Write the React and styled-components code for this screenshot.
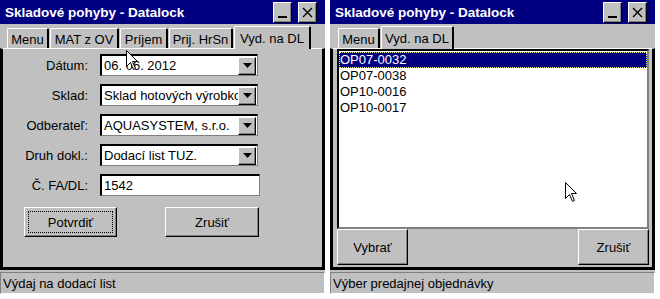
import React from "react";
import styled, { createGlobalStyle } from "styled-components";

const GlobalStyle = createGlobalStyle`
  html, body { margin: 0; padding: 0; background: #ffffff; }
  body { font-family: "Liberation Sans", Arial, sans-serif; font-size: 13px; color: #000; }
  * { box-sizing: border-box; }
`;

const Screen = styled.div`
  display: flex;
  gap: 5px;
  width: 660px;
  height: 299px;
  position: relative;
  overflow: hidden;
`;

const Window = styled.div`
  width: 325px;
  height: 294px;
  display: flex;
  flex-direction: column;
  background: #c0c0c0;
`;

const TitleBar = styled.div`
  height: 24px;
  flex: none;
  background: #000080;
  display: flex;
  align-items: center;
  padding: 0 8px 0 5px;
`;

const Title = styled.div`
  color: #fff;
  font-weight: bold;
  font-size: 13.5px;
  white-space: nowrap;
`;

const Controls = styled.div`
  margin-left: auto;
  display: flex;
  gap: 6px;
`;

const CaptionButton = styled.div`
  width: 19px;
  height: 21px;
  background: #c0c0c0;
  border-top: 1px solid #fff;
  border-left: 1px solid #fff;
  border-right: 1px solid #000;
  border-bottom: 1px solid #000;
  box-shadow: inset -1px -1px 0 #808080;
  display: flex;
  align-items: center;
  justify-content: center;
`;

const TabStrip = styled.div`
  height: 24px;
  flex: none;
  display: flex;
  align-items: flex-end;
  padding-left: ${(p) => p.$pad}px;
`;

const Tab = styled.div`
  flex: none;
  width: ${(p) => p.$w}px;
  height: ${(p) => (p.$active ? 23 : 20)}px;
  margin-right: ${(p) => (p.$active ? 0 : 1)}px;
  display: flex;
  align-items: center;
  justify-content: center;
  white-space: nowrap;
  font-size: 13px;
  border-top: 1px solid #fff;
  border-left: 1px solid #fff;
  border-right: 2px solid #000;
  border-top-left-radius: 2px;
  border-top-right-radius: 2px;
  position: relative;
  padding-top: ${(p) => (p.$active ? 0 : 2)}px;
  ${(p) => (p.$active ? "z-index: 1; margin-bottom: -1px; background: #c0c0c0;" : "")}
`;

const Frame = styled.div`
  flex: 1;
  display: flex;
  flex-direction: column;
  border-left: 3px solid #000;
  border-right: 3px solid #000;
  border-bottom: 3px solid #000;
  border-top: 1px solid #fff;
  min-height: 0;
`;

const Form = styled.div`
  flex: 1;
  display: flex;
  flex-direction: column;
  padding-top: 1px;
`;

const Row = styled.div`
  display: grid;
  grid-template-columns: 85px ${(p) => p.$fw}px;
  column-gap: 12px;
  align-items: center;
  height: 30px;
`;

const Label = styled.div`
  text-align: right;
  font-size: 13px;
  white-space: nowrap;
`;

const Field = styled.div`
  height: 22px;
  background: #fff;
  border-top: 2px solid #000;
  border-left: 2px solid #000;
  border-right: 1px solid #808080;
  border-bottom: 1px solid #808080;
  display: flex;
  align-items: center;
  padding-left: 2px;
  font-size: 13px;
  white-space: nowrap;
  overflow: hidden;
`;

const FieldText = styled.div`
  flex: 1;
  overflow: hidden;
  white-space: nowrap;
`;

const DropButton = styled.div`
  width: 18px;
  height: 18px;
  flex: none;
  margin-right: 1px;
  background: #c0c0c0;
  border-top: 1px solid #fff;
  border-left: 1px solid #fff;
  border-right: 1px solid #000;
  border-bottom: 1px solid #000;
  box-shadow: inset -1px -1px 0 #808080;
  display: flex;
  align-items: center;
  justify-content: center;
`;

const ButtonRow = styled.div`
  display: flex;
  gap: 48px;
  padding-left: 21px;
  margin-top: 7px;
`;

const PushButton = styled.div`
  flex: none;
  width: ${(p) => p.$w}px;
  height: ${(p) => p.$h}px;
  display: flex;
  align-items: center;
  justify-content: center;
  background: #c0c0c0;
  border-top: 1px solid #fff;
  border-left: 1px solid #fff;
  border-right: 1px solid #000;
  border-bottom: 1px solid #000;
  box-shadow: inset -1px -1px 0 #808080;
  font-size: 13px;
  position: relative;
`;

const Focus = styled.div`
  position: absolute;
  inset: 3px;
  border: 1px dotted #000;
`;

const StatusBar = styled.div`
  height: 22px;
  flex: none;
  margin-top: 2px;
  border-top: 1px solid #808080;
  border-left: 1px solid #808080;
  border-right: 1px solid #fff;
  border-bottom: 1px solid #fff;
  display: flex;
  align-items: center;
  padding-left: 2px;
  font-size: 13px;
  white-space: nowrap;
`;

const ListBox = styled.div`
  height: 180px;
  flex: none;
  margin: 0 3px 0 4px;
  background: #fff;
  border-top: 2px solid #000;
  border-left: 2px solid #000;
  border-right: 2px solid #808080;
  border-bottom: 2px solid #808080;
  padding: 1px 0;
`;

const ListItem = styled.div`
  height: 16px;
  line-height: 15px;
  padding-left: 1px;
  font-size: 13px;
  background: ${(p) => (p.$sel ? "#000080" : "transparent")};
  color: ${(p) => (p.$sel ? "#fff" : "#000")};
  outline: ${(p) => (p.$sel ? "1px dotted #ffff80" : "none")};
  outline-offset: -1px;
`;

const ListButtons = styled.div`
  display: flex;
  justify-content: space-between;
  padding: 0 3px 0 4px;
`;

const Cursor = styled.svg`
  position: absolute;
  left: ${(p) => p.$x}px;
  top: ${(p) => p.$y}px;
  pointer-events: none;
`;

const Arrow = () => (
  <svg width="9" height="6" viewBox="0 0 9 6">
    <path d="M0 0 H9 L4.5 5 Z" fill="#000" />
  </svg>
);

const MinIcon = () => (
  <svg width="11" height="14" viewBox="0 0 11 14">
    <rect x="1" y="11" width="9" height="2" fill="#000" />
  </svg>
);

const CloseIcon = () => (
  <svg width="11" height="11" viewBox="0 0 11 11">
    <path d="M1 1 L10 10 M10 1 L1 10" stroke="#000" strokeWidth="1.4" />
  </svg>
);

const Pointer = ({ x, y }) => (
  <Cursor $x={x} $y={y} width="13" height="21" viewBox="0 0 13 21">
    <path
      d="M0.5 0.5 L0.5 16.5 L4.5 12.5 L7.5 19.5 L9.5 18.5 L6.5 11.5 L11.5 11.5 Z"
      fill="#fff"
      stroke="#000"
      strokeWidth="1"
    />
  </Cursor>
);

const Caption = () => (
  <TitleBar>
    <Title>Skladové pohyby - Datalock</Title>
    <Controls>
      <CaptionButton><MinIcon /></CaptionButton>
      <CaptionButton><CloseIcon /></CaptionButton>
    </Controls>
  </TitleBar>
);

const Combo = ({ value }) => (
  <Field>
    <FieldText>{value}</FieldText>
    <DropButton><Arrow /></DropButton>
  </Field>
);

const formRows = [
  { label: "Dátum:", value: "06. 06. 2012", combo: true },
  { label: "Sklad:", value: "Sklad hotových výrobkov", combo: true },
  { label: "Odberateľ:", value: "AQUASYSTEM, s.r.o.", combo: true },
  { label: "Druh dokl.:", value: "Dodací list TUZ.", combo: true },
  { label: "Č. FA/DL:", value: "1542", combo: false },
];

const leftTabs = [
  { t: "Menu", w: 42 },
  { t: "MAT z OV", w: 69 },
  { t: "Príjem", w: 48 },
  { t: "Prij. HrSn", w: 64 },
  { t: "Vyd. na DL", w: 77, active: true },
];
const orders = ["OP07-0032", "OP07-0038", "OP10-0016", "OP10-0017"];

export default function App() {
  return (
    <Screen>
      <GlobalStyle />
      <Window>
        <Caption />
        <TabStrip $pad={7}>
          {leftTabs.map((t) => (
            <Tab key={t.t} $w={t.w} $active={t.active}>{t.t}</Tab>
          ))}
        </TabStrip>
        <Frame>
          <Form>
            {formRows.map((r) => (
              <Row key={r.label} $fw={r.combo ? 158 : 160}>
                <Label>{r.label}</Label>
                {r.combo ? (
                  <Combo value={r.value} />
                ) : (
                  <Field><FieldText>{r.value}</FieldText></Field>
                )}
              </Row>
            ))}
            <ButtonRow>
              <PushButton $w={93} $h={30}>
                <Focus />
                Potvrdiť
              </PushButton>
              <PushButton $w={94} $h={30}>Zrušiť</PushButton>
            </ButtonRow>
          </Form>
        </Frame>
        <StatusBar>Výdaj na dodací list</StatusBar>
      </Window>
      <Window>
        <Caption />
        <TabStrip $pad={8}>
          <Tab $w={42}>Menu</Tab>
          <Tab $w={73} $active>Vyd. na DL</Tab>
        </TabStrip>
        <Frame>
          <ListBox>
            {orders.map((o, i) => (
              <ListItem key={o} $sel={i === 0}>{o}</ListItem>
            ))}
          </ListBox>
          <ListButtons>
            <PushButton $w={71} $h={36}>Vybrať</PushButton>
            <PushButton $w={71} $h={36}>Zrušiť</PushButton>
          </ListButtons>
        </Frame>
        <StatusBar>Výber predajnej objednávky</StatusBar>
      </Window>
      <Pointer x={126} y={50} />
      <Pointer x={565} y={182} />
    </Screen>
  );
}
